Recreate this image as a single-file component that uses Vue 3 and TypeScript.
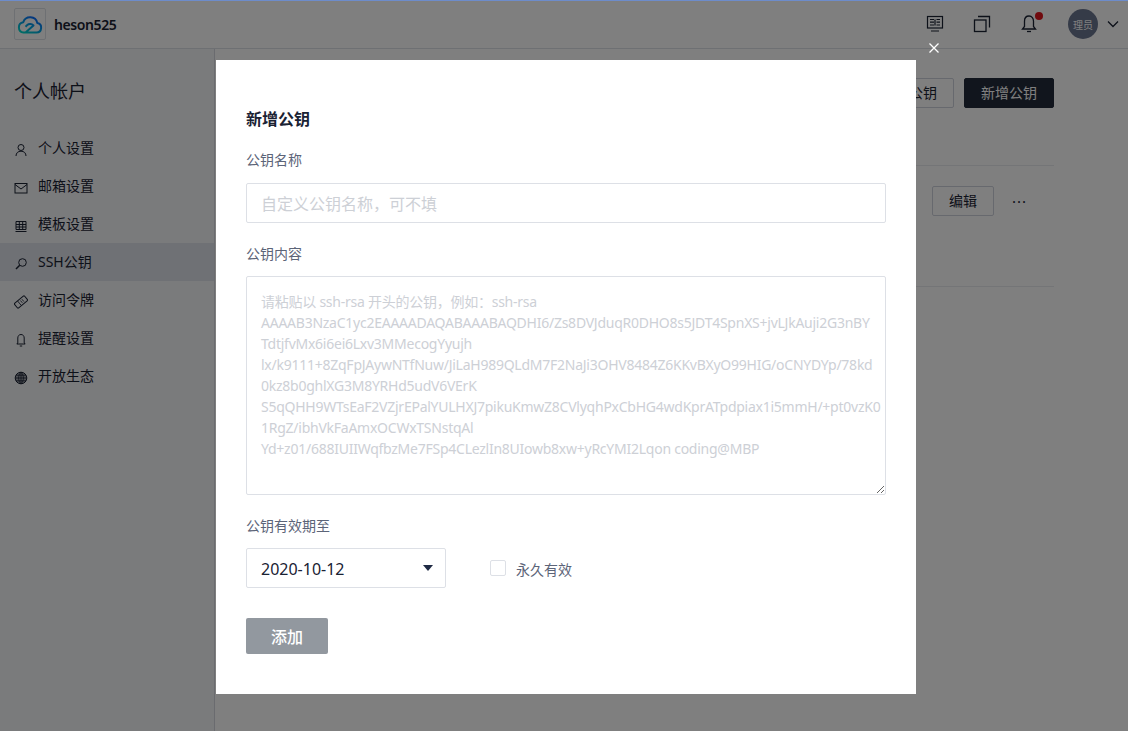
<script setup lang="ts">
const navItems = [
  { label: '个人设置', icon: 'user' },
  { label: '邮箱设置', icon: 'mail' },
  { label: '模板设置', icon: 'grid' },
  { label: 'SSH公钥', icon: 'key', active: true },
  { label: '访问令牌', icon: 'token' },
  { label: '提醒设置', icon: 'bell' },
  { label: '开放生态', icon: 'globe' },
]

const keyHint = [
  '请粘贴以 ssh-rsa 开头的公钥，例如：ssh-rsa',
  'AAAAB3NzaC1yc2EAAAADAQABAAABAQDHI6/Zs8DVJduqR0DHO8s5JDT4SpnXS+jvLJkAuji2G3nBY',
  'TdtjfvMx6i6ei6Lxv3MMecogYyujh',
  'lx/k9111+8ZqFpJAywNTfNuw/JiLaH989QLdM7F2NaJi3OHV8484Z6KKvBXyO99HIG/oCNYDYp/78kd',
  '0kz8b0ghlXG3M8YRHd5udV6VErK',
  'S5qQHH9WTsEaF2VZjrEPalYULHXJ7pikuKmwZ8CVlyqhPxCbHG4wdKprATpdpiax1i5mmH/+pt0vzK0',
  '1RgZ/ibhVkFaAmxOCWxTSNstqAl',
  'Yd+z01/688IUIIWqfbzMe7FSp4CLezlIn8UIowb8xw+yRcYMI2Lqon coding@MBP',
].join('\n')
</script>

<template>
  <div class="page">
    <header class="topbar">
      <div class="brand">
        <div class="logo">
          <svg width="26" height="20" viewBox="0 0 26 20" fill="none">
            <defs>
              <linearGradient id="cloud" x1="0" y1="1" x2="0.7" y2="0">
                <stop offset="0" stop-color="#00e0c8" />
                <stop offset="1" stop-color="#0a6cff" />
              </linearGradient>
            </defs>
            <path d="M6.500 18.500h13a4.800 4.800 0 0 0 .8-9.500A7.300 7.300 0 0 0 6.300 8.200 5.200 5.200 0 0 0 6.500 18.500Z M8.500 18.500 16.500 11.500a4.600 4.600 0 0 0-6.500-.3L8.500 12.700" stroke="url(#cloud)" stroke-width="2" stroke-linejoin="round" />
          </svg>
        </div>
        <span class="team">heson525</span>
      </div>
      <div class="tools">
        <svg class="tool" width="18" height="18" viewBox="0 0 18 18" fill="none" stroke="#1a2233" stroke-width="1.200">
          <rect x="1.500" y="1.500" width="15" height="11.500" />
          <path d="M4 4.500h4M4 7.200h4M4 10h4M10.500 4.500h3.500M10.500 7.200h3.500M10.500 10h3.500M9 4.500v6M5 16h8" />
        </svg>
        <svg class="tool" width="18" height="18" viewBox="0 0 18 18" fill="none" stroke="#1a2233" stroke-width="1.300">
          <rect x="1.500" y="5" width="11.500" height="11.500" />
          <path d="M5 1.500h11.500v11" />
        </svg>
        <div class="bell">
          <svg width="18" height="20" viewBox="0 0 18 20" fill="none" stroke="#1a2233" stroke-width="1.300">
            <path d="M9 2c-3 0-4.500 2.400-4.500 5.200v5.300L2.500 15h13l-2-2.500V7.200C13.500 4.400 12 2 9 2Z" />
            <path d="M7 17.500h4" />
          </svg>
          <span class="dot"></span>
        </div>
        <div class="avatar">理员</div>
        <svg class="chevron" width="12" height="8" viewBox="0 0 12 8" fill="none" stroke="#1a2233" stroke-width="1.300">
          <path d="M1 1.500 6 6.500l5-5" />
        </svg>
      </div>
    </header>

    <div class="body">
      <aside class="sidebar">
        <h2 class="side-title">个人帐户</h2>
        <nav class="nav">
          <div v-for="item in navItems" :key="item.label" class="nav-item" :class="{ active: item.active }">
            <svg width="14" height="14" viewBox="0 0 14 14" fill="none" stroke="#1a2233" stroke-width="1">
              <template v-if="item.icon === 'user'">
                <circle cx="7" cy="4.500" r="3" />
                <path d="M2 13c0-3 2-4.800 5-4.800s5 1.800 5 4.800" />
              </template>
              <template v-else-if="item.icon === 'mail'">
                <rect x="1" y="2.500" width="12" height="9.500" />
                <path d="M1 3.500 7 8l6-4.500" />
              </template>
              <template v-else-if="item.icon === 'grid'">
                <path d="M2 2.500h10v8H2ZM2 5.500h10M2 8h10M5.300 2.500v8M8.700 2.500v8M1.500 12.500h11" />
              </template>
              <template v-else-if="item.icon === 'key'">
                <circle cx="8.500" cy="5.500" r="3.800" />
                <path d="M5.700 8.300 2 12" stroke-width="1.500" />
              </template>
              <template v-else-if="item.icon === 'token'">
                <g transform="rotate(-40 7 7)">
                  <rect x="0.500" y="4" width="13" height="6" rx="1" />
                  <path d="M5 4v6M7.500 5.500v3M9.500 5.500v3" stroke-width=".8" />
                </g>
              </template>
              <template v-else-if="item.icon === 'bell'">
                <path d="M7 1.500c-2 0-3.200 1.500-3.200 3.500v5L2.800 11h8.400l-1-1V5c0-2-1.200-3.500-3.200-3.500ZM5.800 13h2.400" />
              </template>
              <template v-else>
                <circle cx="7" cy="7" r="5.800" fill="#1a2233" fill-opacity=".4" />
                <path d="M1.200 7h11.600M2 4.200h10M2 9.800h10M7 1.200v11.600M7 1.200c-3.200 3-3.200 8.600 0 11.600M7 1.200c3.200 3 3.200 8.600 0 11.600" stroke-width=".8" />
              </template>
            </svg>
            <span>{{ item.label }}</span>
          </div>
        </nav>
      </aside>

      <main class="content">
        <div class="actions">
          <button class="btn">导入公钥</button>
          <button class="btn primary">新增公钥</button>
        </div>
        <div class="key-row">
          <button class="btn small">编辑</button>
          <span class="more">···</span>
        </div>
      </main>
    </div>

    <div class="mask">
      <div class="dialog">
        <span class="close">
          <svg width="10" height="10" viewBox="0 0 10 10" stroke="#fff" stroke-width="1.300">
            <path d="M.5.500l9 9M9.500.500l-9 9" />
          </svg>
        </span>
        <h3 class="dialog-title">新增公钥</h3>
        <label class="field-label">公钥名称</label>
        <input class="input" type="text" placeholder="自定义公钥名称，可不填" />
        <label class="field-label second">公钥内容</label>
        <textarea class="textarea" :placeholder="keyHint"></textarea>
        <label class="field-label third">公钥有效期至</label>
        <div class="expire">
          <div class="select">
            <span>2020-10-12</span>
            <i class="caret"></i>
          </div>
          <label class="check">
            <span class="box"></span>
            <span>永久有效</span>
          </label>
        </div>
        <button class="submit">添加</button>
      </div>
    </div>
  </div>
</template>

<style>
html,
body {
  background: #fff;
}
</style>

<style scoped>
.page {
  position: relative;
  height: 731px;
  overflow: hidden;
  background: #fff;
  color: #1a2233;
  font-family: "Noto Sans", "Noto Sans CJK SC", sans-serif;
  font-size: 14px;
}

.topbar {
  display: flex;
  justify-content: space-between;
  align-items: center;
  height: 48px;
  padding: 0 9px 0 14px;
  border-bottom: 1px solid #dde0e6;
}

.brand {
  display: flex;
  align-items: center;
  gap: 8px;
}

.logo {
  display: flex;
  align-items: center;
  justify-content: center;
  width: 30px;
  height: 30px;
  border: 1px solid #dde0e6;
  border-radius: 2px;
}

.team {
  font-size: 14px;
  font-weight: 600;
  letter-spacing: -0.4px;
}

.tools {
  display: flex;
  align-items: center;
}

.tool {
  margin-right: 29px;
}

.bell {
  position: relative;
  display: flex;
  margin-right: 30px;
}

.dot {
  position: absolute;
  top: -2px;
  right: -5px;
  width: 8px;
  height: 8px;
  border-radius: 50%;
  background: #e0141c;
}

.avatar {
  display: flex;
  align-items: center;
  justify-content: center;
  width: 30px;
  height: 30px;
  border-radius: 50%;
  background: #6b7690;
  color: #fff;
  font-size: 10px;
}

.chevron {
  margin-left: 9px;
}

.body {
  display: flex;
  height: 682px;
}

.sidebar {
  width: 214px;
  border-right: 1px solid #d4d7de;
  background: #f5f6f8;
}

.side-title {
  margin: 29px 0 25px 14px;
  font-size: 18px;
  line-height: 26px;
  font-weight: 400;
}

.nav-item {
  display: flex;
  align-items: center;
  gap: 10px;
  height: 38px;
  padding-left: 14px;
}

.nav-item svg {
  margin-top: 4px;
}

.nav-item span {
  margin-top: -2px;
}

.nav-item.active {
  background: #dfe2ea;
}

.content {
  flex: 1;
  padding: 29px 74px 0 40px;
}

.actions {
  display: flex;
  justify-content: flex-end;
  gap: 10px;
  padding-bottom: 57px;
  border-bottom: 1px solid #e9ebef;
}

.btn {
  width: 90px;
  height: 30px;
  padding: 0 0 2px;
  border: 1px solid #cfd3dc;
  border-radius: 2px;
  background: #fff;
  color: #1a2233;
  font: inherit;
}

.btn.primary {
  border-color: #222b3b;
  background: #222b3b;
  color: #fff;
}

.btn.small {
  width: 62px;
}

.key-row {
  display: flex;
  justify-content: flex-end;
  align-items: flex-start;
  gap: 18px;
  height: 100px;
  padding: 20px 27px 0 0;
  border-bottom: 1px solid #e9ebef;
}

.more {
  line-height: 30px;
  letter-spacing: 1px;
  font-size: 15px;
}

.mask {
  position: absolute;
  inset: 0;
  display: flex;
  justify-content: center;
  align-items: flex-start;
  padding: 59px 0 0 4px;
  border-top: 1px solid #6d8ccb;
  background: rgba(0, 0, 0, 0.5);
}

.dialog {
  position: relative;
  display: flex;
  flex-direction: column;
  align-items: flex-start;
  box-sizing: border-box;
  width: 700px;
  height: 634px;
  padding: 48px 30px 0;
  background: #fff;
}

.close {
  position: absolute;
  top: -17px;
  right: -23px;
  display: flex;
}

.dialog-title {
  margin: 0 0 20px;
  font-size: 16px;
  line-height: 22px;
  font-weight: 700;
}

.field-label {
  color: #5c6478;
  font-size: 14px;
  line-height: 20px;
}

.second {
  margin-top: 21px;
}

.third {
  margin-top: 21px;
}

.input,
.textarea {
  display: block;
  box-sizing: border-box;
  width: 640px;
  margin: 13px 0 0;
  padding: 0 14px;
  border: 1px solid #dde0e6;
  border-radius: 2px;
  outline: none;
  background: #fff;
  color: #1a2233;
  font-family: inherit;
}

.input {
  height: 40px;
  padding-top: 2px;
  font-size: 16px;
}

.textarea {
  height: 219px;
  margin-top: 12px;
  padding: 14px 2px 0 14px;
  font-size: 14px;
  line-height: 21px;
  letter-spacing: -0.25px;
  white-space: pre-wrap;
}

.input::placeholder,
.textarea::placeholder {
  color: #cdd0d6;
  opacity: 1;
}

.expire {
  display: flex;
  align-items: center;
  margin-top: 12px;
}

.select {
  display: flex;
  justify-content: space-between;
  align-items: center;
  box-sizing: border-box;
  width: 200px;
  height: 40px;
  padding: 2px 12px 0 14px;
  border: 1px solid #dde0e6;
  border-radius: 2px;
  font-size: 16px;
}

.caret {
  width: 0;
  height: 0;
  margin-top: -2px;
  border-style: solid;
  border-width: 6px 5.500px 0;
  border-color: #1f2a44 transparent transparent;
}

.check {
  display: flex;
  align-items: center;
  gap: 10px;
  margin-left: 44px;
  color: #5c6478;
  font-size: 14px;
}

.check span:last-child {
  margin-top: 2px;
}

.box {
  box-sizing: border-box;
  width: 16px;
  height: 16px;
  border: 1px solid #dde0e6;
  border-radius: 2px;
}

.submit {
  width: 82px;
  height: 36px;
  margin-top: 30px;
  padding: 0;
  border: none;
  border-radius: 2px;
  background: #92989f;
  color: #fff;
  font-family: inherit;
  font-size: 16px;
  font-weight: 500;
}
</style>
